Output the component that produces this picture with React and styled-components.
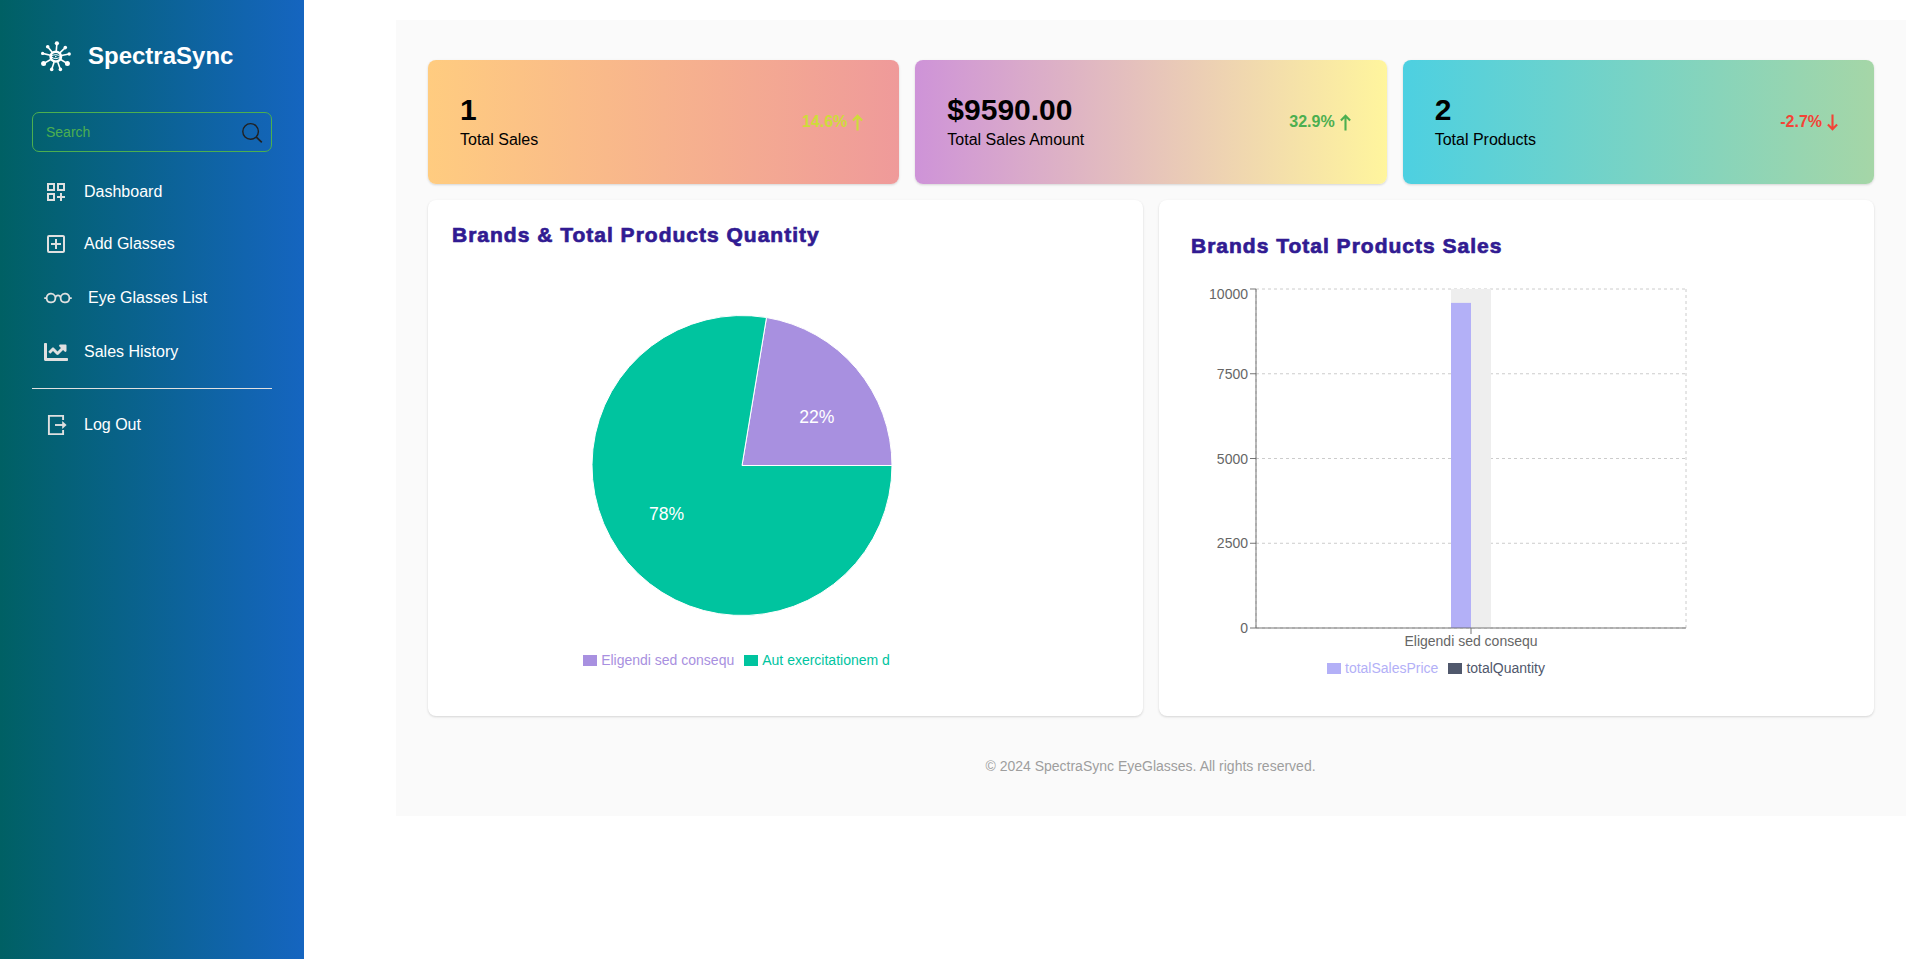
import React from "react";
import styled, { createGlobalStyle } from "styled-components";
import { MdOutlineDashboardCustomize, MdOutlineAddBox } from "react-icons/md";
import { BsEyeglasses } from "react-icons/bs";
import { FaChartLine } from "react-icons/fa";

const GlobalStyle = createGlobalStyle`
  *, *::before, *::after { box-sizing: border-box; }
  body {
    margin: 0;
    background: #fff;
    color: #000;
    font-family: Arial, "Liberation Sans", sans-serif;
    font-size: 16px;
    line-height: 24px;
    overflow: hidden;
  }
  h1, h2, p { margin: 0; }
  svg { display: block; flex-shrink: 0; }
`;

const Layout = styled.div`
  display: flex;
  align-items: flex-start;
  height: 959px;
`;

const Sidebar = styled.aside`
  width: 304px;
  height: 100%;
  flex-shrink: 0;
  padding: 32px;
  background: linear-gradient(to right, #006064, #1565c0);
`;

const Brand = styled.div`
  display: flex;
  align-items: center;
  gap: 16px;
  height: 48px;
  margin-bottom: 32px;
  padding-left: 8px;
  color: #fff;
`;

const BrandName = styled.h1`
  font-size: 24px;
  line-height: 32px;
  font-weight: 700;
`;

const SearchBox = styled.label`
  display: flex;
  align-items: center;
  justify-content: space-between;
  height: 40px;
  padding: 0 8px 0 13px;
  border: 1px solid #4caf50;
  border-radius: 7px;
  svg { margin-top: 2px; }
`;

const SearchInput = styled.input`
  width: 180px;
  padding: 0;
  border: 0;
  outline: 0;
  background: transparent;
  font: 14px/20px Arial, "Liberation Sans", sans-serif;
  color: #4caf50;
  &::placeholder { color: #4caf50; opacity: 1; }
`;

const Nav = styled.nav`
  display: flex;
  flex-direction: column;
  gap: 4px;
  margin-top: 16px;
`;

const NavItem = styled.a`
  display: flex;
  align-items: center;
  gap: 16px;
  padding: 12px;
  color: #fff;
  svg { color: #e0e0e0; }
`;

const Divider = styled.hr`
  width: 100%;
  height: 1px;
  margin: 8px 0;
  border: 0;
  background: #e0e0e0;
`;

const Main = styled.main`
  width: 1510px;
  height: 796px;
  margin: 20px 0 0 92px;
  padding: 40px 32px 0;
  background: #fafafa;
`;

const Cards = styled.section`
  display: grid;
  grid-template-columns: repeat(3, 1fr);
  gap: 16px;
`;

const StatCard = styled.article`
  display: flex;
  align-items: center;
  justify-content: space-between;
  height: 124px;
  padding: 32px;
  border-radius: 8px;
  background: linear-gradient(to right, ${(p) => p.$from}, ${(p) => p.$to});
  box-shadow: 0 1px 3px rgba(0, 0, 0, 0.1), 0 1px 2px rgba(0, 0, 0, 0.06);
`;

const StatValue = styled.p`
  font-size: 30px;
  line-height: 36px;
  font-weight: 700;
`;

const Trend = styled.span`
  display: flex;
  align-items: center;
  gap: 5px;
  padding-right: 4px;
  font-weight: 700;
  color: ${(p) => p.$color};
`;

const Panels = styled.section`
  display: grid;
  grid-template-columns: repeat(2, 1fr);
  gap: 16px;
  margin-top: 16px;
`;

const Panel = styled.article`
  height: 516px;
  padding: ${(p) => p.$pad};
  border-radius: 8px;
  background: #fff;
  box-shadow: 0 1px 3px rgba(0, 0, 0, 0.1), 0 1px 2px rgba(0, 0, 0, 0.06);
`;

const PanelTitle = styled.h2`
  font-size: 21px;
  line-height: 28px;
  font-weight: 800;
  letter-spacing: 1px;
  color: #311b92;
  -webkit-text-stroke: 0.7px #311b92;
  white-space: nowrap;
`;

const PieArea = styled.div`
  width: 569px;
  margin-top: 65px;
  display: flex;
  flex-direction: column;
  align-items: center;
`;

const PieSvg = styled.svg`
  margin-left: 11px;
`;

const PieLabel = styled.text`
  font-size: 17.6px;
  fill: #fff;
`;

const BarArea = styled.div`
  width: 490px;
  margin-top: 24px;
`;

const AxisLabel = styled.text`
  font-size: 14px;
  fill: #666;
`;

const Legend = styled.ul`
  display: flex;
  justify-content: center;
  gap: 10px;
  margin: ${(p) => p.$top}px 0 0;
  padding: 0;
  list-style: none;
  font-size: 14px;
  line-height: 21px;
`;

const LegendItem = styled.li`
  display: flex;
  align-items: center;
  gap: 4px;
  color: ${(p) => p.$color};
  &::before {
    content: "";
    width: 14px;
    height: 11px;
    background: currentColor;
  }
`;

const Footer = styled.footer`
  margin-top: 40px;
  padding-right: 1px;
  text-align: center;
  font-size: 14px;
  line-height: 20px;
  color: #9e9e9e;
`;

const SPIKES = [
  [56.9, 43.3, 2.1], [47.7, 46.7, 1.8], [65.3, 47.6, 1.8], [42.6, 53.4, 1.6], [69.2, 54, 1.7],
  [43.6, 63.6, 2.5], [67.4, 63.6, 2.5], [51.7, 69.4, 1.8], [60.4, 69.4, 1.8],
];

function LogoIcon() {
  return (
    <svg width="32" height="32" viewBox="40 40 32 32" fill="none" stroke="currentColor">
      {SPIKES.map(([x, y, r]) => (
        <g key={`${x}-${y}`}>
          <line x1={55.8 + (x - 55.8) * 0.42} y1={56.6 + (y - 56.6) * 0.42} x2={x} y2={y} strokeWidth="1.6" />
          <circle cx={x} cy={y} r={r} fill="currentColor" stroke="none" />
        </g>
      ))}
      <ellipse cx="55.8" cy="56.6" rx="5.2" ry="4.9" strokeWidth="2.6" />
      <path d="M51 56.6q4.8-4 9.6 0q-4.8 4-9.6 0z" strokeWidth="1" />
      <circle cx="55.8" cy="56.6" r="0.8" fill="currentColor" stroke="none" />
    </svg>
  );
}

function SearchIcon() {
  return (
    <svg width="22" height="22" viewBox="0 0 22 22" fill="none" stroke="#212121" strokeWidth="1.4">
      <circle cx="9.6" cy="9.4" r="7.8" />
      <path d="M15.1 14.9l5.7 5.5" strokeWidth="1.7" />
    </svg>
  );
}

function LogOutIcon() {
  return (
    <svg width="24" height="24" viewBox="0 0 24 24" fill="none" stroke="currentColor" strokeWidth="1.9">
      <path d="M19.1 7V2.9H4.9v18.2h14.2V17" />
      <path d="M11 12h9" />
      <path d="M18.2 8l4.4 4-4.4 4z" fill="currentColor" stroke="none" />
    </svg>
  );
}

function Arrow({ down }) {
  return (
    <svg width="11" height="17" viewBox="0 0 11 17" fill="none" stroke="currentColor" strokeWidth="2.1">
      <path d={down ? "M5.5 0.5v14.8M0.9 10.6l4.6 4.7 4.6-4.7" : "M5.5 16.5V1.7M0.9 6.4l4.6-4.7 4.6 4.7"} />
    </svg>
  );
}

const STATS = [
  { value: "1", label: "Total Sales", trend: "14.6%", color: "#cddc39", from: "#ffcc80", to: "#ef9a9a" },
  { value: "$9590.00", label: "Total Sales Amount", trend: "32.9%", color: "#4caf50", from: "#ce93d8", to: "#fff59d" },
  { value: "2", label: "Total Products", trend: "-2.7%", color: "#f44336", from: "#4dd0e1", to: "#a5d6a7", down: true },
];

function PieChart() {
  const a = (80.6 * Math.PI) / 180;
  const x = 151 + 150 * Math.cos(a);
  const y = 151.5 - 150 * Math.sin(a);
  return (
    <PieSvg width="302" height="302" viewBox="0 0 302 302" stroke="#fff">
      <path d={`M151 151.5L301 151.5A150 150 0 0 0 ${x} ${y}Z`} fill="#a890e0" />
      <path d={`M151 151.5L${x} ${y}A150 150 0 1 0 301 151.5Z`} fill="#00c49f" />
      <PieLabel x="208.2" y="109" stroke="none">22%</PieLabel>
      <PieLabel x="93.2" y="206" textAnchor="end" stroke="none">78%</PieLabel>
    </PieSvg>
  );
}

const Y_TICKS = [
  [10000, 5, 15], [7500, 89.75, 95], [5000, 174.5, 179.5], [2500, 259.25, 264], [0, 344, 349],
];

function BarChart() {
  return (
    <svg width="500" height="370" viewBox="0 0 500 370">
      <g stroke="#ccc" strokeDasharray="3 3">
        {Y_TICKS.map(([v, y]) => <line key={v} x1="65" x2="495" y1={y} y2={y} />)}
        <line x1="65" x2="65" y1="5" y2="344" />
        <line x1="495" x2="495" y1="5" y2="344" />
      </g>
      <rect x="260" y="5" width="40" height="339" fill="#eee" />
      <rect x="260" y="18.9" width="20" height="325.1" fill="#b3b0f7" />
      <g stroke="#666" strokeOpacity="0.9">
        <path d="M65 5V344M65 344H495M280 344v6" />
        {Y_TICKS.map(([v, y]) => <line key={v} x1="59" x2="65" y1={y} y2={y} />)}
      </g>
      {Y_TICKS.map(([v, , base]) => (
        <AxisLabel key={v} x="57" y={base} textAnchor="end">{v}</AxisLabel>
      ))}
      <AxisLabel x="280" y="362" textAnchor="middle">Eligendi sed consequ</AxisLabel>
    </svg>
  );
}

export default function App() {
  return (
    <Layout>
      <GlobalStyle />
      <Sidebar>
        <Brand>
          <LogoIcon />
          <BrandName>SpectraSync</BrandName>
        </Brand>
        <SearchBox>
          <SearchInput placeholder="Search" />
          <SearchIcon />
        </SearchBox>
        <Nav>
          <NavItem><MdOutlineDashboardCustomize size={24} />Dashboard</NavItem>
          <NavItem><MdOutlineAddBox size={24} />Add Glasses</NavItem>
          <NavItem><BsEyeglasses size={28} />Eye Glasses List</NavItem>
          <NavItem><FaChartLine size={24} />Sales History</NavItem>
          <Divider />
          <NavItem><LogOutIcon />Log Out</NavItem>
        </Nav>
      </Sidebar>
      <Main>
        <Cards>
          {STATS.map((s) => (
            <StatCard key={s.label} $from={s.from} $to={s.to}>
              <div>
                <StatValue>{s.value}</StatValue>
                <p>{s.label}</p>
              </div>
              <Trend $color={s.color}>{s.trend}<Arrow down={s.down} /></Trend>
            </StatCard>
          ))}
        </Cards>
        <Panels>
          <Panel $pad="21px 24px">
            <PanelTitle>Brands &amp; Total Products Quantity</PanelTitle>
            <PieArea>
              <PieChart />
              <Legend $top={34}>
                <LegendItem $color="#a890e0">Eligendi sed consequ</LegendItem>
                <LegendItem $color="#00c49f">Aut exercitationem d</LegendItem>
              </Legend>
            </PieArea>
          </Panel>
          <Panel $pad="32px">
            <PanelTitle>Brands Total Products Sales</PanelTitle>
            <BarArea>
              <BarChart />
              <Legend $top={4}>
                <LegendItem $color="#b3b0f7">totalSalesPrice</LegendItem>
                <LegendItem $color="#50586c">totalQuantity</LegendItem>
              </Legend>
            </BarArea>
          </Panel>
        </Panels>
        <Footer>© 2024 SpectraSync EyeGlasses. All rights reserved.</Footer>
      </Main>
    </Layout>
  );
}
